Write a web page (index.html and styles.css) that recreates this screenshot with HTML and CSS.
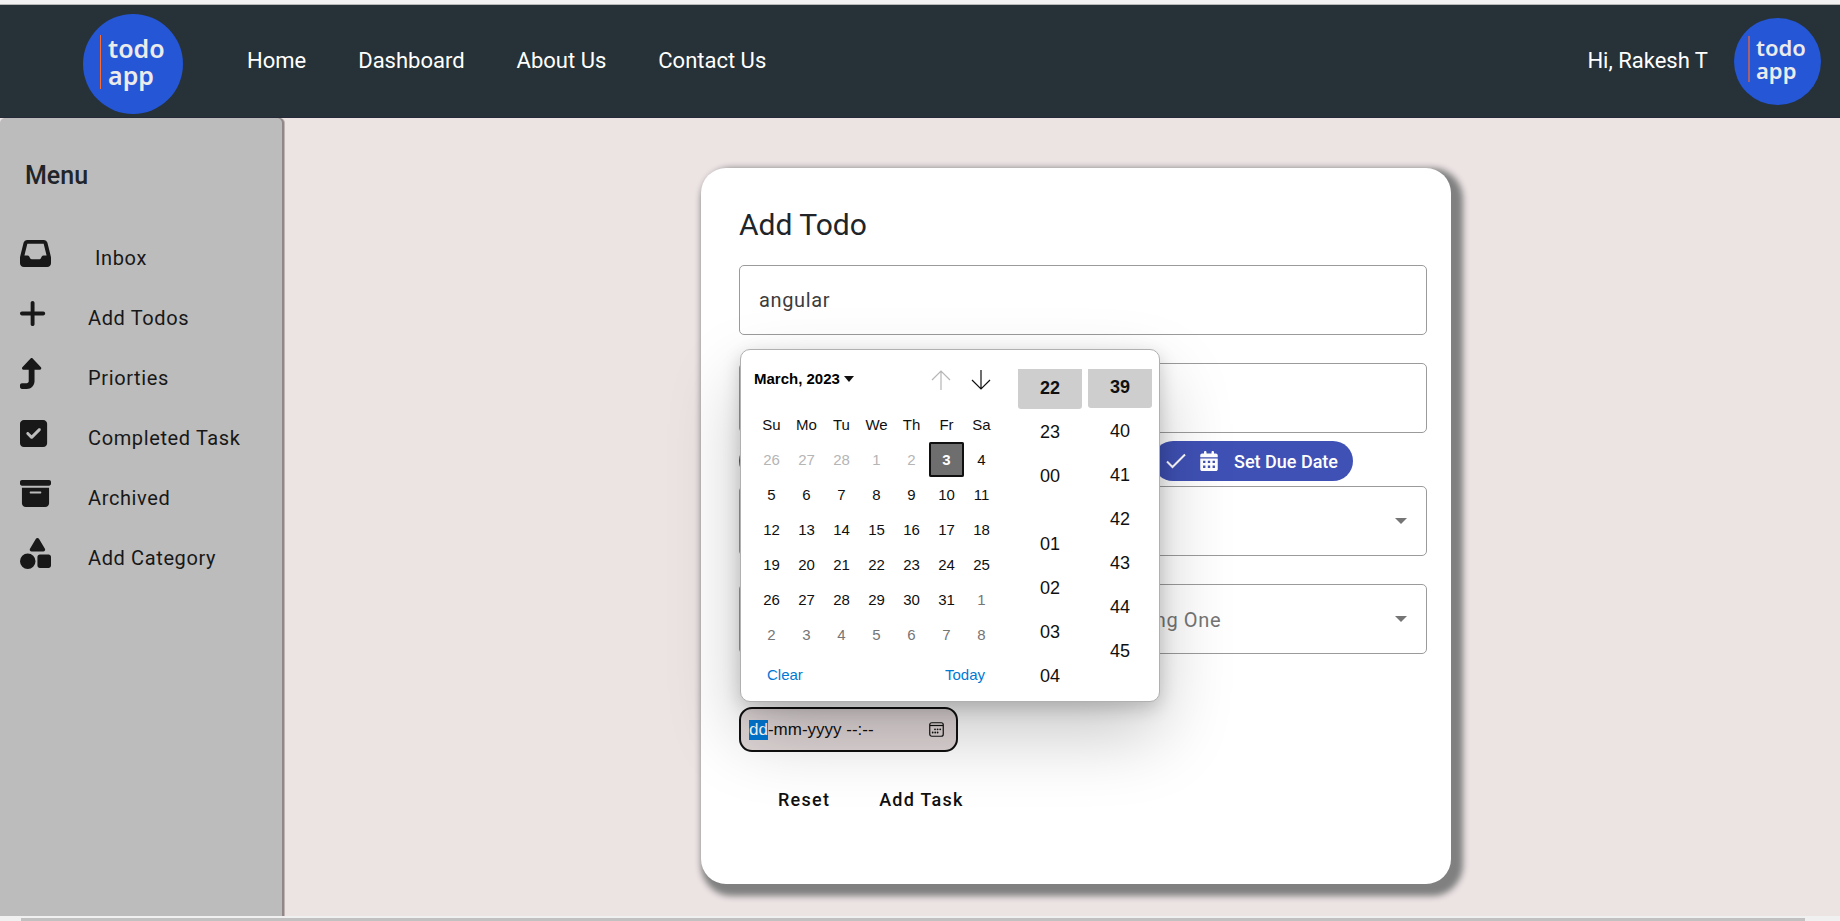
FILE: index.html
```html
<!DOCTYPE html>
<html lang="en">
<head>
<meta charset="utf-8">
<meta name="viewport" content="width=device-width, initial-scale=1">
<title>Todo App</title>
<link rel="stylesheet" href="styles.css">
</head>
<body>
<div class="window-edge"></div>
<header class="topbar">
  <a class="logo" href="#"><span class="logo-text">todo<br>app</span></a>
  <nav class="nav">
    <a href="#">Home</a>
    <a href="#">Dashboard</a>
    <a href="#">About Us</a>
    <a href="#">Contact Us</a>
  </nav>
  <div class="user">
    <span class="greeting">Hi, Rakesh T</span>
    <a class="logo logo-small" href="#"><span class="logo-text">todo<br>app</span></a>
  </div>
</header>

<div class="layout">
  <aside class="sidebar">
    <h2 class="sidebar-title">Menu</h2>
    <nav class="menu">
      <a class="menu-item menu-item-inset" href="#">
        <svg viewBox="0 0 512 512"><path d="M121 32C91.6 32 66 52 58.9 80.5L1.9 308.4C.6 313.5 0 318.7 0 323.9V416c0 35.3 28.7 64 64 64H448c35.3 0 64-28.7 64-64V323.9c0-5.2-.6-10.4-1.9-15.5l-57-227.9C446 52 420.4 32 391 32H121zm0 64H391l48 192H387.8c-12.1 0-23.2 6.8-28.6 17.7l-14.3 28.6c-5.4 10.8-16.5 17.7-28.6 17.7H195.8c-12.1 0-23.2-6.8-28.6-17.7l-14.3-28.6c-5.4-10.8-16.5-17.7-28.6-17.7H73L121 96z"/></svg>
        <span>Inbox</span>
      </a>
      <a class="menu-item" href="#">
        <svg viewBox="16 0 512 512"><path d="M256 80c0-17.7-14.3-32-32-32s-32 14.3-32 32V224H48c-17.7 0-32 14.3-32 32s14.3 32 32 32H192V432c0 17.7 14.3 32 32 32s32-14.3 32-32V288H400c17.7 0 32-14.3 32-32s-14.3-32-32-32H256V80z"/></svg>
        <span>Add Todos</span>
      </a>
      <a class="menu-item" href="#">
        <svg viewBox="0 0 512 512"><path d="M350 177.5c3.8-8.8 2-19-4.6-26l-136-144C204.9 2.7 198.6 0 192 0s-12.9 2.7-17.4 7.5l-136 144c-6.6 7-8.4 17.2-4.6 26s12.5 14.5 22 14.5h88v192c0 17.7-14.3 32-32 32H32c-17.7 0-32 14.3-32 32v32c0 17.7 14.3 32 32 32h80c70.7 0 128-57.3 128-128V192h88c9.6 0 18.2-5.7 22-14.5z"/></svg>
        <span>Priorties</span>
      </a>
      <a class="menu-item" href="#">
        <svg viewBox="0 0 512 512"><path d="M64 32C28.7 32 0 60.7 0 96V416c0 35.3 28.7 64 64 64H384c35.3 0 64-28.7 64-64V96c0-35.3-28.7-64-64-64H64zM337 209L209 337c-9.4 9.4-24.6 9.4-33.9 0l-64-64c-9.4-9.4-9.4-24.6 0-33.9s24.6-9.4 33.9 0l47 47L303 175c9.4-9.4 24.6-9.4 33.9 0s9.4 24.6 0 33.9z"/></svg>
        <span>Completed Task</span>
      </a>
      <a class="menu-item" href="#">
        <svg viewBox="0 0 512 512"><path d="M32 32H480c17.7 0 32 14.3 32 32V96c0 17.7-14.3 32-32 32H32C14.3 128 0 113.7 0 96V64C0 46.3 14.3 32 32 32zm0 128H480V416c0 35.3-28.7 64-64 64H96c-35.3 0-64-28.7-64-64V160zm128 80c0 8.800 7.200 16 16 16H336c8.800 0 16-7.200 16-16s-7.200-16-16-16H176c-8.800 0-16 7.200-16 16z"/></svg>
        <span>Archived</span>
      </a>
      <a class="menu-item" href="#">
        <svg viewBox="0 0 512 512"><path d="M315.400 15.500C309.700 5.900 299.200 0 288 0s-21.700 5.900-27.400 15.500l-96 160c-5.900 9.900-6.100 22.200-.4 32.200s16.300 16.200 27.800 16.200H384c11.500 0 22.200-6.200 27.800-16.200s5.500-22.300-.4-32.200l-96-160zM288 312V456c0 22.100 17.900 40 40 40H472c22.100 0 40-17.900 40-40V312c0-22.100-17.900-40-40-40H328c-22.100 0-40 17.900-40 40zM128 512a128 128 0 1 0 0-256 128 128 0 1 0 0 256z"/></svg>
        <span>Add Category</span>
      </a>
    </nav>
  </aside>

  <main class="content">
    <form class="card">
      <h1 class="card-title">Add Todo</h1>
      <input class="field" type="text" value="angular" aria-label="Title">
      <input class="field field-spaced" type="text" aria-label="Description">
      <div class="chips">
        <button class="chip chip-first" type="button" aria-label="Set category"></button>
        <button class="chip" type="button">
          <svg class="chip-check" viewBox="0 0 20 16"><path d="M1 8.500L6.500 14L19 1.500"/></svg>
          <svg class="chip-calendar" viewBox="0 0 448 512"><path fill-rule="evenodd" d="M128 0c17.700 0 32 14.300 32 32V64H288V32c0-17.700 14.300-32 32-32s32 14.300 32 32V64h48c26.500 0 48 21.500 48 48v48H0V112C0 85.500 21.500 64 48 64H96V32c0-17.700 14.300-32 32-32zM0 192H448V464c0 26.500-21.500 48-48 48H48c-26.500 0-48-21.500-48-48V192zM72 250V310H132V250zM194 250V310H254V250zM316 250V310H376V250zM72 374V434H132V374zM194 374V434H254V374zM316 374V434H376V374z"/></svg>
          <span>Set Due Date</span>
        </button>
      </div>
      <div class="select-wrap">
        <select class="field" aria-label="Priority"><option></option></select>
      </div>
      <div class="field-row">
        <input class="field" type="text" aria-label="New category">
        <div class="select-wrap">
          <select class="field placeholder" aria-label="Category"><option>Choose Existing One</option></select>
        </div>
      </div>

      <div class="date">
        <input class="date-input" id="due" type="text" value="dd-mm-yyyy --:--" aria-label="Due date" spellcheck="false" autofocus>
        <button class="date-toggle" type="button" aria-label="Open calendar">
          <svg viewBox="0 0 15 15"><rect x=".75" y=".75" width="13.500" height="13.500" rx="2"/><path d="M1 3.500H14"/><g><circle cx="6" cy="7.300" r=".9"/><circle cx="8.600" cy="7.300" r=".9"/><circle cx="11.200" cy="7.300" r=".9"/><circle cx="3.700" cy="10.500" r=".9"/><circle cx="6.200" cy="10.500" r=".9"/><circle cx="8.600" cy="10.500" r=".9"/></g></svg>
        </button>

        <div class="picker">
          <div class="picker-calendar">
            <div class="picker-head">
              <button class="picker-month" type="button">March, 2023 <span class="caret"></span></button>
              <button class="picker-arrow muted" type="button" aria-label="Previous month"><svg viewBox="0 0 20 20"><path d="M10 20V1M1 10L10 1L19 10"/></svg></button>
              <button class="picker-arrow" type="button" aria-label="Next month"><svg viewBox="0 0 20 20"><path d="M10 0V19M1 10L10 19L19 10"/></svg></button>
            </div>
            <table class="days">
              <thead><tr><th>Su</th><th>Mo</th><th>Tu</th><th>We</th><th>Th</th><th>Fr</th><th>Sa</th></tr></thead>
              <tbody>
                <tr><td class="off">26</td><td class="off">27</td><td class="off">28</td><td class="off">1</td><td class="off">2</td><td class="today">3</td><td>4</td></tr>
                <tr><td>5</td><td>6</td><td>7</td><td>8</td><td>9</td><td>10</td><td>11</td></tr>
                <tr><td>12</td><td>13</td><td>14</td><td>15</td><td>16</td><td>17</td><td>18</td></tr>
                <tr><td>19</td><td>20</td><td>21</td><td>22</td><td>23</td><td>24</td><td>25</td></tr>
                <tr><td>26</td><td>27</td><td>28</td><td>29</td><td>30</td><td>31</td><td class="next">1</td></tr>
                <tr><td class="next">2</td><td class="next">3</td><td class="next">4</td><td class="next">5</td><td class="next">6</td><td class="next">7</td><td class="next">8</td></tr>
              </tbody>
            </table>
            <div class="picker-foot"><button type="button">Clear</button><button type="button">Today</button></div>
          </div>
          <ul class="times">
            <li class="picked">22</li><li>23</li><li class="day-end">00</li><li>01</li><li>02</li><li>03</li><li>04</li>
          </ul>
          <ul class="times minutes">
            <li class="picked">39</li><li>40</li><li>41</li><li>42</li><li>43</li><li>44</li><li>45</li>
          </ul>
        </div>
      </div>

      <div class="actions">
        <button type="reset">Reset</button>
        <button type="submit">Add Task</button>
      </div>
    </form>
  </main>
</div>
<div class="scroll-track"><div class="scroll-thumb"></div></div>
<script src="script.js"></script>
</body>
</html>
```

FILE: styles.css
```css
* { box-sizing: border-box; }

body {
  margin: 0;
  min-height: 100vh;
  display: flex;
  flex-direction: column;
  background: #ece3e3;
  color: #212529;
  font-family: Roboto, sans-serif;
}

a { color: inherit; text-decoration: none; }
button { border: 0; padding: 0; background: none; color: inherit; font: inherit; cursor: pointer; }

.window-edge { height: 5px; background: #f2f2f2; border-bottom: 1px solid #b8b8b8; }

/* Header */
.topbar {
  display: flex;
  align-items: center;
  height: 113px;
  padding: 0 19px 0 83px;
  background: #263238;
  border-bottom: 1px solid #262a38;
  color: #fff;
  font-size: 22px;
}

.logo {
  display: flex;
  flex: none;
  align-items: center;
  width: 100px;
  height: 100px;
  margin-top: 6px;
  padding: 0 0 2px 17px;
  border-radius: 50%;
  background: #2456d6;
  color: #ebebeb;
  font: 600 25px/27px "Noto Sans", sans-serif;
}

.logo-text { padding-left: 7px; border-left: 1px solid #ff6b2c; margin-bottom: 2px; }

.logo-small {
  width: 87px;
  height: 87px;
  margin-top: 0;
  padding-left: 14px;
  font-size: 22px;
  line-height: 23px;
}

.logo-small .logo-text { padding-left: 6px; border-left: 2px solid #a5616f; }

.nav { display: flex; gap: 52px; margin-left: 64px; padding-bottom: 1px; }
.user { display: flex; align-items: center; gap: 26px; margin-left: auto; }
.greeting { padding-bottom: 1px; }

/* Sidebar */
.layout { display: flex; flex: 1; }

.sidebar {
  flex: none;
  width: 282px;
  padding: 40px 20px;
  border-radius: 5px 5px 0 0;
  background: #bcbcbc;
  box-shadow: 2px 0 0 #918787, 3px 0 0 #bdb3b3;
}

.sidebar-title { margin: 0 0 49px 5px; font-size: 25px; font-weight: 500; line-height: 36px; }

.menu-item {
  display: flex;
  align-items: center;
  gap: 37px;
  height: 60px;
  color: #181818;
  font-size: 20px;
  letter-spacing: 0.03125em;
}

.menu { margin-top: -20px; }
.menu-item-inset { gap: 44px; }
.menu-item svg { width: 31px; height: 31px; fill: #181818; }
.menu-item span { padding-top: 10px; }

/* Todo form */
.content { flex: 1; display: flex; justify-content: center; align-items: flex-start; padding: 50px 0 32px 30px; }

.card {
  width: 750px;
  max-width: 100%;
  padding: 37px 24px 67px 38px;
  border-radius: 25px;
  background: #fff;
  box-shadow: 6px 6px 6px 6px #808080;
}

.card-title { margin: 0 0 20px; font-size: 30px; font-weight: 400; line-height: 40px; }

.field {
  display: block;
  width: 100%;
  height: 70px;
  padding: 0 19px;
  border: 1px solid #9b9b9b;
  border-radius: 5px;
  background: none;
  color: #3c3c3c;
  font: 400 20px Roboto, sans-serif;
  letter-spacing: 0.03125em;
  appearance: none;
}

.field-spaced { margin-top: 28px; }
.placeholder { padding-top: 2px; color: #757575; }

.select-wrap { position: relative; }

.select-wrap::after {
  content: "";
  position: absolute;
  top: 32px;
  right: 20px;
  border: 6px solid transparent;
  border-top-color: #757575;
  border-bottom: 0;
}

.field-row { display: grid; grid-template-columns: 253px 1fr; gap: 14px; margin-top: 28px; }

.chips { display: flex; gap: 8px; margin: 8px 0 5px; }

.chip {
  display: flex;
  align-items: center;
  height: 40px;
  padding: 0 15px 0 13px;
  border-radius: 20px;
  background: #3f51b5;
  color: #fff;
  font-size: 18px;
  font-weight: 500;
}

.chip-first { flex: 0 1 406px; }
.chip-check { width: 20px; height: 16px; margin-right: 14px; fill: none; stroke: #fff; stroke-width: 2; }
.chip-calendar { width: 18px; height: 20px; margin-right: 16px; fill: #fff; }

/* Due date */
.date { position: relative; width: 219px; margin-top: 53px; }

.date-input {
  display: block;
  width: 100%;
  height: 45px;
  padding: 0 8px;
  border: 2px solid #101010;
  border-radius: 13px;
  outline: 0;
  background: #dfd6d6;
  color: #101010;
  font: 17px "Liberation Sans", sans-serif;
}

.date-input::selection { background: #0078d4; color: #fff; }

.date-toggle { position: absolute; top: 15px; right: 14px; width: 15px; height: 15px; }
.date-toggle svg { display: block; fill: none; stroke: #101010; stroke-width: 1.2; }
.date-toggle g { fill: #101010; stroke: none; }

.picker {
  position: absolute;
  bottom: calc(100% + 5px);
  left: 1px;
  display: flex;
  width: 420px;
  height: 353px;
  padding: 19px 7px 5px 13px;
  border: 1px solid #b0b0b0;
  border-radius: 10px;
  background: #fff;
  color: #101010;
  font: 15px "Liberation Sans", sans-serif;
  box-shadow: 0 32px 72px rgba(0, 0, 0, 0.22), 0 6px 18px rgba(0, 0, 0, 0.18);
}

.picker-calendar { width: 245px; margin-right: 19px; }
.picker-head { display: flex; align-items: center; height: 22px; padding-right: 8px; }
.picker-month { display: flex; align-items: center; gap: 4px; margin-right: auto; padding-bottom: 3px; color: #000; font-weight: 700; }
.caret { border: 5px solid transparent; border-top: 6px solid #101010; border-bottom: 0; }
.picker-arrow { width: 20px; height: 20px; margin-left: 20px; }
.picker-arrow svg { display: block; fill: none; stroke: #101010; stroke-width: 1.2; }
.muted { opacity: 0.3; }

.days { margin-top: 16px; border-collapse: collapse; text-align: center; table-layout: fixed; width: 100%; }
.days th, .days td { height: 35px; padding: 0; font-weight: 400; }
.days .off { color: #b5b5b5; }
.days .next { color: #757575; }
.days .today { border-radius: 2px; background: #6e6e6e; box-shadow: inset 0 0 0 2px #101010; color: #fff; font-weight: 700; }

.picker-foot { display: flex; justify-content: space-between; padding: 14px 14px 0 13px; color: #0078d4; }

.times { width: 64px; margin: 0 6px 0 0; padding: 0; list-style: none; font-size: 18px; line-height: 42px; text-align: center; overflow: hidden; }
.times li { height: 42px; margin-bottom: 2px; }
.times .picked { height: 40px; border-radius: 0 0 3px 3px; background: #cecece; font-weight: 700; line-height: 38px; }
.times .day-end { margin-bottom: 26px; }
.minutes { margin-right: 0; }
.minutes .picked { height: 39px; line-height: 36px; }

.actions { display: flex; gap: 49px; margin-top: 30px; padding-left: 39px; }
.actions button { height: 35px; color: #101010; font-size: 18px; font-weight: 500; letter-spacing: 0.07em; }

/* Horizontal scroll bar */
.scroll-track { height: 5px; padding: 2px 35px 0 21px; background: #f0f0f0; }
.scroll-thumb { height: 3px; background: #c1c1c1; }
```

FILE: script.js
```js
// Start editing at the day part of the due date.
const due = document.getElementById("due");
due.focus({ preventScroll: true });
due.setSelectionRange(0, 2);
```
